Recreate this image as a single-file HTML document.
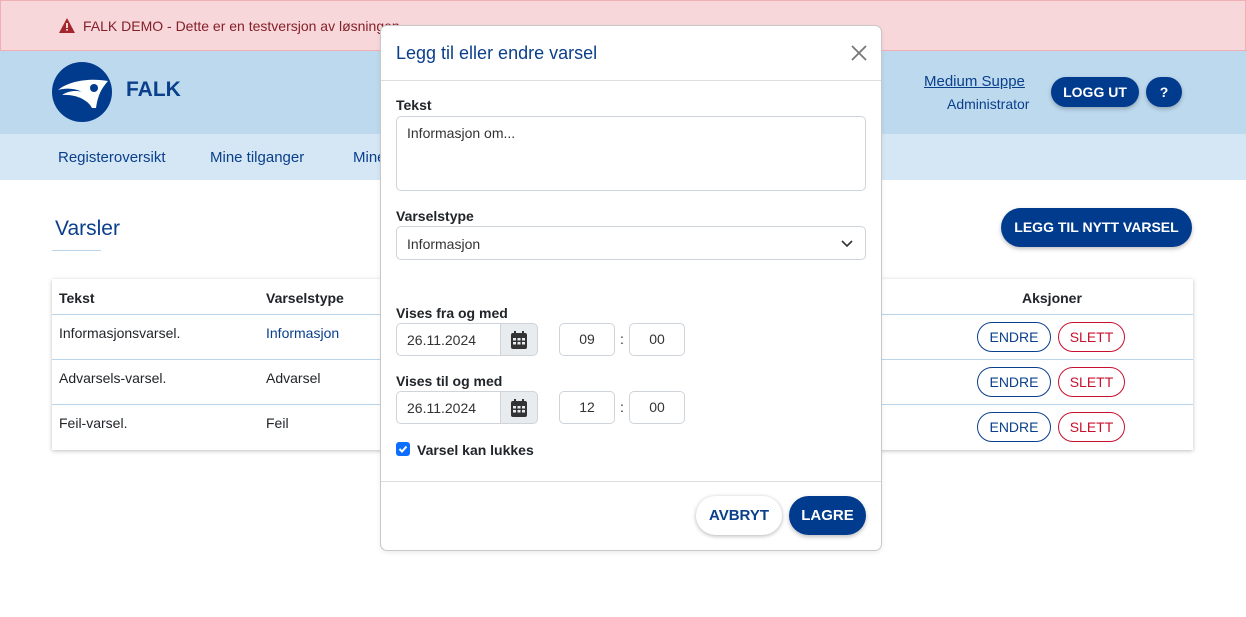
<!DOCTYPE html>
<html><head><meta charset="utf-8"><style>
*{box-sizing:border-box;margin:0;padding:0}
body{width:1246px;height:617px;position:relative;overflow:hidden;background:#fff;font-family:"Liberation Sans",sans-serif;font-size:14px;color:#212529}
.a{position:absolute}
.banner{left:0;top:0;width:1246px;height:51px;background:#f8d7da;border:1px solid #f1aeb5;color:#842029;font-size:14px}
.hdr{left:0;top:51px;width:1246px;height:83px;background:#bdd9ee}
.nav{left:0;top:134px;width:1246px;height:46px;background:#d5e7f4}
.nav span{position:absolute;top:15px;color:#0a3f8c;font-size:15px}
.pill{position:absolute;border-radius:20px;background:#003b8e;color:#fff;font-weight:bold;text-align:center;box-shadow:0 2px 4px rgba(0,0,0,.25)}
.tbl{left:52px;top:279px;width:1141px;height:171px;box-shadow:0 1px 4px rgba(0,0,0,.25);background:#fff}
.row{position:absolute;left:0;width:1141px;border-top:1px solid #b8d5ec}
.c{position:absolute;font-size:14px}
.ob{position:absolute;width:74px;height:30px;border:1px solid #0a3f8c;border-radius:16px;color:#0a3f8c;text-align:center;line-height:28px;font-size:14px}
.os{position:absolute;width:67px;height:30px;border:1px solid #c8102e;border-radius:16px;color:#c8102e;text-align:center;line-height:28px;font-size:14px}
.modal{left:381px;top:26px;width:500px;height:524px;background:#fff;border-radius:6px;box-shadow:0 0 0 1px #c8c8c8,0 2px 6px rgba(0,0,0,.1)}
.lbl{position:absolute;font-weight:bold;font-size:14px;color:#212529}
.inp{position:absolute;border:1px solid #ced4da;border-radius:5px;background:#fff;font-size:14px;color:#333}
</style></head><body>
<div class="a banner"><svg class="a" style="left:58px;top:17px" width="16" height="15" viewBox="0 0 16 15"><path d="M8 0L16 15H0Z" fill="#a4262c"/><rect x="7.2" y="5" width="1.6" height="5" fill="#fff"/><rect x="7.2" y="11" width="1.6" height="1.6" fill="#fff"/></svg><span class="a" style="left:82px;top:17px">FALK DEMO - Dette er en testversjon av løsningen</span></div>
<div class="a hdr">
<svg class="a" style="left:52px;top:11px" width="60" height="60" viewBox="0 0 60 60"><circle cx="30" cy="30" r="30" fill="#003b8e"/><path d="M6 28C18 18 40 16 56 19C50 26 46 32 44 46L40 46C36 38 24 32 10 33C16 29 24 28 30 30C22 26 14 26 6 28Z" fill="#fff"/><circle cx="42" cy="26" r="4" fill="#003b8e"/></svg>
<span class="a" style="left:126px;top:27px;font-size:21px;font-weight:bold;color:#0a3f8c">FALK</span>
<span class="a" style="left:924px;top:22px;font-size:15px;color:#0a3f8c;text-decoration:underline">Medium Suppe</span>
<span class="a" style="left:947px;top:45px;font-size:14px;color:#0a3f8c">Administrator</span>
<div class="pill" style="left:1051px;top:26px;width:88px;height:30px;line-height:30px;font-size:14px">LOGG UT</div>
<div class="pill" style="left:1146px;top:26px;width:36px;height:30px;line-height:30px;font-size:14px">?</div>
</div>
<div class="a nav"><span style="left:58px">Registeroversikt</span><span style="left:210px">Mine tilganger</span><span style="left:353px">Mine</span></div>
<span class="a" style="left:55px;top:217px;font-size:21px;color:#0a3f8c">Varsler</span>
<div class="a" style="left:52px;top:250px;width:49px;height:1px;background:#b8d5ec"></div>
<div class="pill" style="left:1001px;top:208px;width:191px;height:39px;line-height:39px;font-size:14px">LEGG TIL NYTT VARSEL</div>
<div class="a tbl">
<span class="c" style="left:7px;top:11px;font-weight:bold">Tekst</span><span class="c" style="left:214px;top:11px;font-weight:bold">Varselstype</span><span class="c" style="left:970px;top:11px;font-weight:bold">Aksjoner</span>
<div class="row" style="top:35px;height:45px"><span class="c" style="left:7px;top:10px">Informasjonsvarsel.</span><span class="c" style="left:214px;top:10px;color:#0a3f8c">Informasjon</span><div class="ob" style="left:925px;top:7px">ENDRE</div><div class="os" style="left:1006px;top:7px">SLETT</div></div>
<div class="row" style="top:80px;height:45px"><span class="c" style="left:7px;top:10px">Advarsels-varsel.</span><span class="c" style="left:214px;top:10px">Advarsel</span><div class="ob" style="left:925px;top:7px">ENDRE</div><div class="os" style="left:1006px;top:7px">SLETT</div></div>
<div class="row" style="top:125px;height:46px"><span class="c" style="left:7px;top:10px">Feil-varsel.</span><span class="c" style="left:214px;top:10px">Feil</span><div class="ob" style="left:925px;top:7px">ENDRE</div><div class="os" style="left:1006px;top:7px">SLETT</div></div>
</div>
<div class="a modal">
<span class="a" style="left:15px;top:17px;font-size:18px;color:#0a3f8c">Legg til eller endre varsel</span>
<svg class="a" style="left:470px;top:19px" width="16" height="16" viewBox="0 0 16 16"><path d="M1 1L15 15M15 1L1 15" stroke="#777" stroke-width="1.8"/></svg>
<div class="a" style="left:0;top:54px;width:500px;height:1px;background:#ddd"></div>
<span class="lbl" style="left:15px;top:71px">Tekst</span>
<div class="inp" style="left:15px;top:90px;width:470px;height:75px;padding:8px 10px">Informasjon om...</div>
<span class="lbl" style="left:15px;top:182px">Varselstype</span>
<div class="inp" style="left:15px;top:200px;width:470px;height:34px;padding:9px 10px">Informasjon<svg class="a" style="left:444px;top:13px" width="12" height="8" viewBox="0 0 12 8"><path d="M1 1L6 6L11 1" stroke="#333" stroke-width="1.6" fill="none"/></svg></div>
<span class="lbl" style="left:15px;top:279px">Vises fra og med</span>
<div class="inp" style="left:15px;top:297px;width:105px;height:33px;padding:8px 10px;border-radius:5px 0 0 5px">26.11.2024</div>
<div class="inp" style="left:119px;top:297px;width:38px;height:33px;background:#e9ecef;border-radius:0 5px 5px 0"><svg class="a" style="left:10px;top:7px" width="16" height="18" viewBox="0 0 16 18"><rect x="3" y="0" width="2" height="4" fill="#333"/><rect x="11" y="0" width="2" height="4" fill="#333"/><rect x="0" y="2" width="16" height="16" rx="2" fill="#333"/><g fill="#e9ecef"><rect x="2" y="7" width="3" height="2.5"/><rect x="6.5" y="7" width="3" height="2.5"/><rect x="11" y="7" width="3" height="2.5"/><rect x="2" y="11" width="3" height="2.5"/><rect x="6.5" y="11" width="3" height="2.5"/><rect x="11" y="11" width="3" height="2.5"/></g></svg></div>
<div class="inp" style="left:178px;top:297px;width:56px;height:33px;text-align:center;line-height:31px">09</div>
<span class="a" style="left:239px;top:305px">:</span>
<div class="inp" style="left:248px;top:297px;width:56px;height:33px;text-align:center;line-height:31px">00</div>
<span class="lbl" style="left:15px;top:347px">Vises til og med</span>
<div class="inp" style="left:15px;top:365px;width:105px;height:33px;padding:8px 10px;border-radius:5px 0 0 5px">26.11.2024</div>
<div class="inp" style="left:119px;top:365px;width:38px;height:33px;background:#e9ecef;border-radius:0 5px 5px 0"><svg class="a" style="left:10px;top:7px" width="16" height="18" viewBox="0 0 16 18"><rect x="3" y="0" width="2" height="4" fill="#333"/><rect x="11" y="0" width="2" height="4" fill="#333"/><rect x="0" y="2" width="16" height="16" rx="2" fill="#333"/><g fill="#e9ecef"><rect x="2" y="7" width="3" height="2.5"/><rect x="6.5" y="7" width="3" height="2.5"/><rect x="11" y="7" width="3" height="2.5"/><rect x="2" y="11" width="3" height="2.5"/><rect x="6.5" y="11" width="3" height="2.5"/><rect x="11" y="11" width="3" height="2.5"/></g></svg></div>
<div class="inp" style="left:178px;top:365px;width:56px;height:33px;text-align:center;line-height:31px">12</div>
<span class="a" style="left:239px;top:373px">:</span>
<div class="inp" style="left:248px;top:365px;width:56px;height:33px;text-align:center;line-height:31px">00</div>
<div class="a" style="left:15px;top:416px;width:14px;height:14px;background:#0d6efd;border-radius:3px"><svg width="14" height="14" viewBox="0 0 14 14"><path d="M3.5 7L6 9.5L10.5 4.5" stroke="#fff" stroke-width="2" fill="none"/></svg></div>
<span class="lbl" style="left:36px;top:416px">Varsel kan lukkes</span>
<div class="a" style="left:0;top:455px;width:500px;height:1px;background:#ddd"></div>
<div class="a" style="left:315px;top:470px;width:86px;height:39px;border-radius:20px;background:#fff;box-shadow:0 1px 4px rgba(0,0,0,.3);color:#0a3f8c;font-weight:bold;font-size:15px;text-align:center;line-height:39px">AVBRYT</div>
<div class="pill" style="left:408px;top:470px;width:77px;height:39px;line-height:39px;font-size:15px">LAGRE</div>
</div>
</body></html>
